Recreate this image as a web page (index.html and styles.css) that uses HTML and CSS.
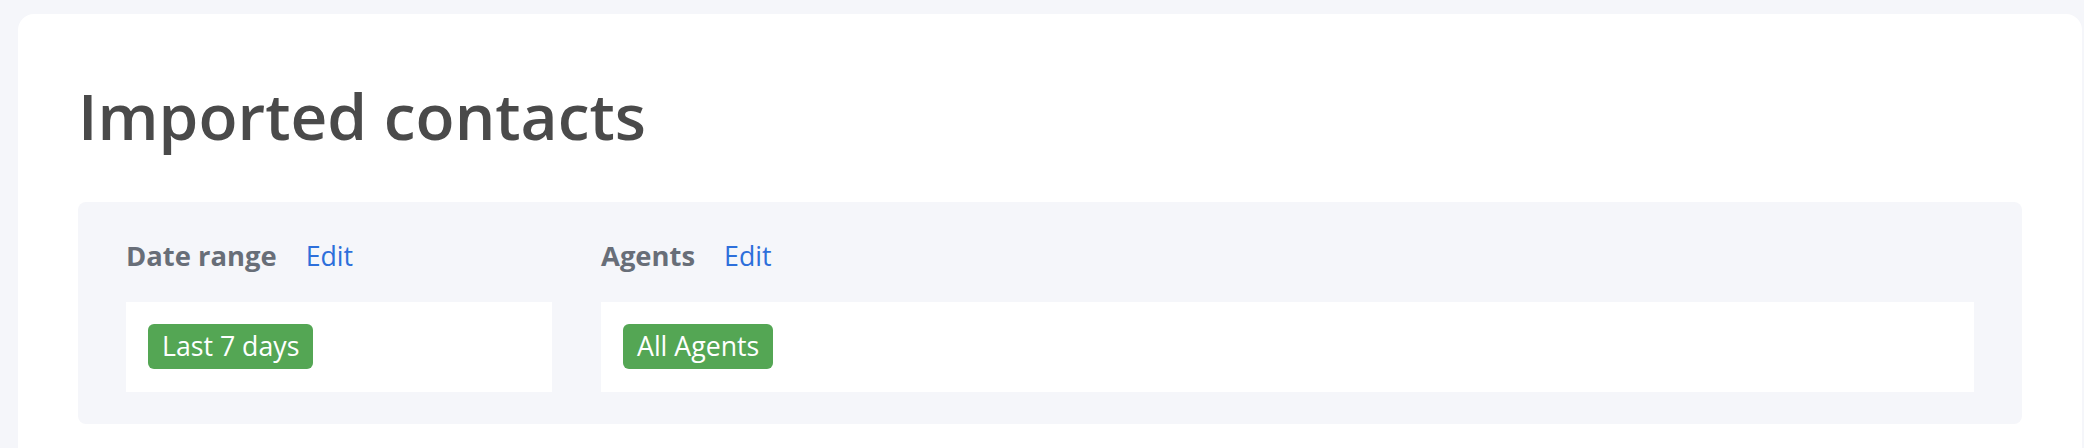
FILE: index.html
```html
<!DOCTYPE html>
<html lang="en">
<head>
<meta charset="utf-8">
<title>Imported contacts</title>
<link rel="stylesheet" href="styles.css">
</head>
<body>
  <main class="card">
    <h1 class="title">Imported contacts</h1>
    <section class="filters">
      <div class="filter filter-date">
        <div class="filter-head">
          <span class="filter-label">Date range</span>
          <a class="filter-edit" href="#">Edit</a>
        </div>
        <div class="filter-body">
          <span class="badge">Last 7 days</span>
        </div>
      </div>
      <div class="filter filter-agents">
        <div class="filter-head">
          <span class="filter-label">Agents</span>
          <a class="filter-edit" href="#">Edit</a>
        </div>
        <div class="filter-body">
          <span class="badge">All Agents</span>
        </div>
      </div>
    </section>
  </main>
</body>
</html>
```
FILE: styles.css
```css
* { box-sizing: border-box; }

html, body {
  height: 100%;
}

body {
  margin: 0;
  padding: 14px 2px 0 18px;
  background: #f5f6fa;
  font-family: "Open Sans", "Noto Sans", sans-serif;
  overflow: hidden;
}

.card {
  background: #ffffff;
  border-radius: 16px 16px 0 0;
  min-height: 100%;
  padding: 58px 60px 40px 60px;
}

.title {
  margin: 0 0 43px 0;
  font-size: 64px;
  font-weight: 600;
  line-height: normal;
  color: #4a4a4a;
  letter-spacing: 0;
}

.filters {
  background: #f5f6fa;
  border-radius: 8px;
  padding: 35px 48px 32px 48px;
  display: grid;
  grid-template-columns: 426px 1fr;
  column-gap: 49px;
}

.filter-head {
  display: flex;
  align-items: baseline;
  gap: 29px;
  font-size: 26.7px;
  line-height: normal;
  margin-bottom: 28px;
}

.filter-label {
  font-weight: 700;
  font-size: 27.4px;
  color: #686e78;
}

.filter-edit {
  color: #2d6fdb;
  text-decoration: none;
  font-weight: 400;
}

.filter-body {
  background: #ffffff;
  height: 90px;
  padding: 22px 22px;
  display: flex;
  align-items: flex-start;
}

.badge {
  display: inline-flex;
  align-items: center;
  height: 45px;
  padding: 0 14px;
  background: #54a654;
  color: #ffffff;
  border-radius: 6px;
  font-size: 26.7px;
  line-height: 1;
}
```
